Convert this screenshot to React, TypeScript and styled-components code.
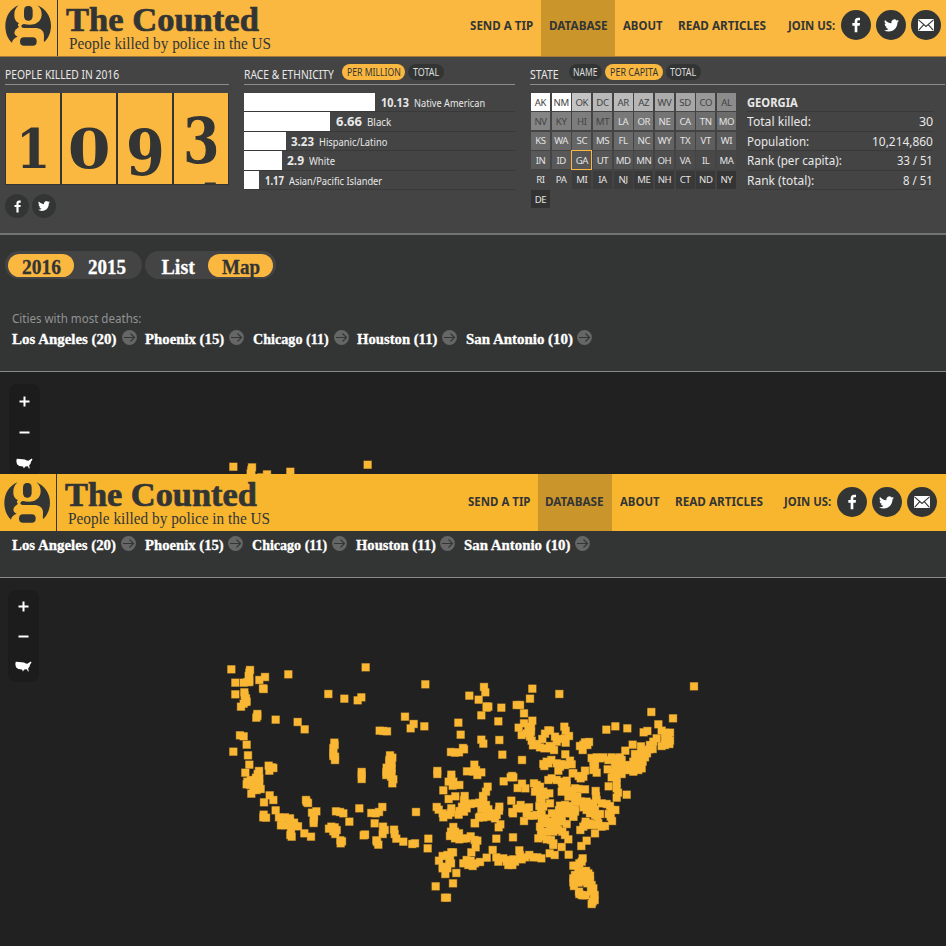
import React, { useLayoutEffect, useRef, useState } from "react";
import styled, { createGlobalStyle, css } from "styled-components";

const GlobalStyle = createGlobalStyle`
  *, *::before, *::after { box-sizing: border-box; }
  body { margin: 0; background: #212121; overflow: hidden; }
  ul, h1, h2, p, dl, dd { margin: 0; padding: 0; list-style: none; }
`;

const SANS = `"Noto Sans", "Open Sans", sans-serif`;
const SERIF = `"Liberation Serif", "Times New Roman", serif`;
const INK = "#333535";
const YELLOW = "#fab840";

/* ---------- fitted text ---------- */

const FitBox = styled.span<{ $w: number }>`
  display: inline-block;
  flex: none;
  width: ${(p) => p.$w}px;
  white-space: nowrap;
`;
const FitInner = styled.span`
  display: inline-block;
  transform-origin: 0 50%;
`;

/** Condenses or widens a run of text so that it fills exactly `w` pixels. */
function Fit({ w, children }: { w: number; children: React.ReactNode }) {
  const ref = useRef<HTMLSpanElement>(null);
  const [scale, setScale] = useState(1);
  useLayoutEffect(() => {
    if (ref.current) setScale(w / ref.current.offsetWidth);
  }, [w]);
  return (
    <FitBox $w={w}>
      <FitInner ref={ref} style={{ transform: `scaleX(${scale})` }}>
        {children}
      </FitInner>
    </FitBox>
  );
}

/* ---------- icons ---------- */

const Logo = () => (
  <svg width="46" height="41" viewBox="13 15 138 123" fill={INK} preserveAspectRatio="none">
    <path d="M54 16C30 25 14 49 14 77c0 21 7 39 20 51 1-8 7-15 17-18-9-4-12-11-8-18 2-5 8-8 12-12-4-3-5-6 0-11-11-5-14-13-14-25 0-13 5-21 13-28z" />
    <path d="M110 16c8 7 13 15 13 27 0 15-9 26-24 30-10 2-20 1-29-1-4 0-8 3-8 6 0 4 3 6 8 6h32c18 0 28 8 28 23 0 8-1 14 0 20 13-12 21-30 21-50 0-27-16-51-41-61z" />
    <rect x="70" y="18" width="26" height="44" rx="11" ry="14" />
    <rect x="58" y="112" width="50" height="25" rx="12" />
  </svg>
);
const Facebook = ({ size }: { size: number }) => (
  <svg width={size} height={size} viewBox="0 0 24 24" fill="#fff">
    <path d="M10 23V13H6.500V9H10V6.500C10 3 12 1 15 1h3v4h-2c-1.500 0-2 .7-2 2v2h4l-.5 4H14v10z" />
  </svg>
);
const Twitter = ({ size }: { size: number }) => (
  <svg width={size} height={size} viewBox="0 0 24 24" fill="#fff">
    <path d="M23.950 4.570a10 10 0 0 1-2.820.77 4.960 4.960 0 0 0 2.160-2.720c-.95.55-2 .96-3.120 1.180a4.920 4.920 0 0 0-8.380 4.480C7.690 8.090 4.070 6.130 1.640 3.160a4.820 4.820 0 0 0-.67 2.480c0 1.710.87 3.210 2.190 4.100a4.900 4.900 0 0 1-2.230-.62v.06a4.920 4.920 0 0 0 3.950 4.830 5 5 0 0 1-2.210.08 4.940 4.940 0 0 0 4.600 3.420A9.870 9.870 0 0 1 0 19.540a14 14 0 0 0 7.550 2.210c9.060 0 14-7.500 14-13.980l-.02-.64a9.900 9.900 0 0 0 2.420-2.560z" />
  </svg>
);
const Mail = () => (
  <svg width="16" height="12" viewBox="0 0 16 12">
    <rect width="16" height="12" rx="1" fill="#fff" />
    <path d="M.5.8 8 7.500 15.500.8M.8 11.200l4.700-5.400M15.200 11.200l-4.700-5.400" fill="none" stroke={INK} strokeWidth="1.1" />
  </svg>
);
const ArrowBadge = () => (
  <svg width="15" height="15" viewBox="0 0 15 15">
    <circle cx="7.500" cy="7.500" r="7.400" fill="#666" />
    <path d="M2 7.500h10.500M8.500 3.500l4 4-4 4" fill="none" stroke={INK} strokeWidth="1.100" />
  </svg>
);
const Country = () => (
  <svg width="17" height="11" viewBox="0 0 17 11" fill="#fff">
    <path d="M.8.7 4 1.100l5 .3 1.800 1.100 1.500.3L14.300 1.400l1.400-1 .8 1-1.500 2.400-.4 1.700-1.500 2 .7 2.700-.9.2-1-2.200-2.600.2-1.400 2.200L7 8.500 3.300 8 1 6.200.3 3z" />
  </svg>
);

/* ---------- masthead ---------- */

const Masthead = styled.header<{ $second?: boolean }>`
  display: flex;
  flex: none;
  height: 57px;
  background: ${(p) => (p.$second ? "#f8b62f" : YELLOW)};
  color: ${INK};
  ${(p) => !p.$second && css`border-bottom: 1px solid #a17a3c;`}
`;
const Brand = styled.div<{ $second?: boolean }>`
  width: ${(p) => (p.$second ? 57 : 58)}px;
  padding: ${(p) => (p.$second ? "8px 0 0 4px" : "5px 0 0 5px")};
  border-right: 1px solid ${INK};
`;
const Titles = styled.div<{ $second?: boolean }>`
  display: flex;
  flex-direction: column;
  padding: ${(p) => (p.$second ? 1 : 0)}px 0 0 8px;
  width: ${(p) => (p.$second ? 403 : 404.5)}px;
`;
const Title = styled.h1`
  padding-top: 3px;
  font: bold 34px/34px ${SERIF};
  height: 37px;
  -webkit-text-stroke: 0.7px ${INK};
`;
const Subtitle = styled.p`
  padding-left: 3px;
  font: 16.500px/14px ${SERIF};
`;
const Nav = styled.nav<{ $second?: boolean }>`
  display: flex;
  height: 100%;
  font: bold 12.500px/51px ${SANS};
  ${(p) => p.$second && css`line-height: 55px;`}
`;
const NavItem = styled.a<{ $active?: boolean }>`
  padding: 0 7.700px;
  height: 100%;
  background: ${(p) => (p.$active ? "#ca962c" : "transparent")};
`;
const Join = styled.div`
  padding-left: 13.500px;
`;
const Socials = styled.div<{ $second?: boolean }>`
  display: flex;
  gap: 5px;
  padding: ${(p) => (p.$second ? "13px 0 0 5.500px" : "10px 0 0 6.500px")};
`;
const Round = styled.span<{ $size: number }>`
  display: flex;
  align-items: center;
  justify-content: center;
  width: ${(p) => p.$size}px;
  height: ${(p) => p.$size}px;
  border-radius: 50%;
  background: ${INK};
`;

function Header({ second }: { second?: boolean }) {
  return (
    <Masthead $second={second}>
      <Brand $second={second}><Logo /></Brand>
      <Titles $second={second}>
        <Title><Fit w={second ? 192 : 193}>The Counted</Fit></Title>
        <Subtitle><Fit w={202}>People killed by police in the US</Fit></Subtitle>
      </Titles>
      <Nav $second={second}>
        <NavItem><Fit w={second ? 62.3 : 63}>SEND A TIP</Fit></NavItem>
        <NavItem $active><Fit w={59}>DATABASE</Fit></NavItem>
        <NavItem><Fit w={40}>ABOUT</Fit></NavItem>
        <NavItem><Fit w={88}>READ ARTICLES</Fit></NavItem>
        <Join><Fit w={47}>JOIN US:</Fit></Join>
      </Nav>
      <Socials $second={second}>
        <Round $size={30}><Facebook size={16} /></Round>
        <Round $size={30}><Twitter size={15} /></Round>
        <Round $size={30}><Mail /></Round>
      </Socials>
    </Masthead>
  );
}

/* ---------- statistics ---------- */

const Stats = styled.section`
  display: flex;
  height: 178px;
  padding: 5px 0 0 5px;
  background: #444;
  border-bottom: 2px solid #737373;
  color: #e8e8e8;
  font-family: ${SANS};
`;
const Block = styled.div<{ $w: number; $gap?: number }>`
  flex: none;
  width: ${(p) => p.$w}px;
  margin-right: ${(p) => p.$gap ?? 0}px;
`;
const Heading = styled.h2`
  display: flex;
  height: 23px;
  padding-top: 4px;
  border-bottom: 1px solid #8c8c8c;
  font: 12px/17px ${SANS};
`;
const Pills = styled.span<{ $left: number }>`
  display: flex;
  gap: 3px;
  margin: -2px 0 0 ${(p) => p.$left}px;
`;
const Pill = styled.span<{ $on?: boolean }>`
  height: 16px;
  padding: 0 4.800px;
  border-radius: 8px;
  background: ${(p) => (p.$on ? YELLOW : INK)};
  color: ${(p) => (p.$on ? INK : "#ddd")};
  font: 11px/16px ${SANS};
`;
const Digits = styled.div`
  display: flex;
  gap: 2px;
  height: 92px;
  margin: 8px 0 0;
  background: ${INK};
  border: 1px solid ${INK};
  border-top: 0;
`;
const Flap = styled.div`
  display: flex;
  flex: 1;
  flex-direction: column;
  align-items: center;
  overflow: hidden;
  background: ${YELLOW};
  color: ${INK};
`;
const Numeral = styled.span<{ $size: number; $top: number; $sx: number }>`
  flex: none;
  height: 76px;
  font: bold ${(p) => p.$size}px/76px "DejaVu Serif", serif;
  transform: scaleX(${(p) => p.$sx});
  margin-top: ${(p) => p.$top}px;
`;
const NextNumeral = styled(Numeral)`
  margin-left: 8px;
`;
const Share = styled.div`
  display: flex;
  gap: 3px;
  padding-top: 9px;
`;
const Bars = styled.ul`
  padding-top: 8px;
`;
const BarRow = styled.li`
  display: flex;
  height: 19.400px;
  border-bottom: 1px solid #393939;
  font: 11px/20px ${SANS};
`;
const Bar = styled.span<{ $w: number }>`
  flex: none;
  width: ${(p) => p.$w}px;
  margin-right: 5.500px;
  background: #fff;
`;
const BarValue = styled.b`
  margin-right: 5px;
  font-size: 12px;
`;
const StateBody = styled.div`
  display: flex;
  padding: 8px 0 0 1px;
`;
const StateGrid = styled.div`
  display: grid;
  grid-template-columns: repeat(10, 19px);
  grid-auto-rows: 18px;
  gap: 1.430px 1.670px;
`;
const Cell = styled.span<{ $bg: string; $fg: string; $on?: boolean }>`
  display: flex;
  align-items: center;
  justify-content: center;
  padding-top: 1px;
  background: ${(p) => p.$bg};
  color: ${(p) => p.$fg};
  font: 9.600px/16px ${SANS};
  letter-spacing: -0.4px;
  ${(p) => p.$on && css`outline: 1.500px solid ${YELLOW}; outline-offset: -0.500px;`}
`;
const Facts = styled.dl`
  width: 186px;
  margin-left: 11px;
`;
const Fact = styled.div`
  display: flex;
  justify-content: space-between;
  height: 19.400px;
  border-bottom: 1px solid #393939;
  font: 12.500px/20px ${SANS};
`;

const RACES: [number, string, number, string, number][] = [
  [131, "10.13", 28, "Native American", 71],
  [86, "6.66", 26, "Black", 24],
  [41.5, "3.23", 23, "Hispanic/Latino", 68],
  [37.5, "2.9", 17, "White", 26],
  [15, "1.17", 19, "Asian/Pacific Islander", 93],
];

const STATES =
  "AK NM OK DC AR AZ WV SD CO AL NV KY HI MT LA OR NE CA TN MO KS WA SC MS FL NC WY TX VT WI IN ID GA UT MD MN OH VA IL MA RI PA MI IA NJ ME NH CT ND NY DE".split(" ");
const SHADES = [
  255, 255, 196, 184, 187, 182, 172, 167, 153, 140,
  133, 128, 125, 122, 121, 119, 117, 113, 110, 108,
  106, 104, 102, 99, 106, 103, 99, 96, 94, 91,
  89, 88, 86, 86, 83, 80, 78, 75, 73, 71,
  68, 68, 60, 60, 60, 57, 57, 57, 56, 52, 50,
];

const FACTS: [string, number, string, number][] = [
  ["Total killed:", 64, "30", 14],
  ["Population:", 62, "10,214,860", 61],
  ["Rank (per capita):", 95, "33 / 51", 36],
  ["Rank (total):", 67, "8 / 51", 30],
];

function Statistics() {
  return (
    <Stats>
      <Block $w={224} $gap={15}>
        <Heading><Fit w={114}>PEOPLE KILLED IN 2016</Fit></Heading>
        <Digits>
          <Flap><Numeral $size={55} $top={18} $sx={0.9}>1</Numeral></Flap>
          <Flap><Numeral $size={55} $top={18} $sx={1.12}>0</Numeral></Flap>
          <Flap><Numeral $size={64} $top={22} $sx={0.87}>9</Numeral></Flap>
          <Flap>
            <Numeral $size={64} $top={10} $sx={0.82}>3</Numeral>
            <NextNumeral $size={64} $top={-9} $sx={0.9}>4</NextNumeral>
          </Flap>
        </Digits>
        <Share>
          <Round $size={24}><Facebook size={13} /></Round>
          <Round $size={24}><Twitter size={12} /></Round>
        </Share>
      </Block>
      <Block $w={271} $gap={15}>
        <Heading>
          <Fit w={90}>RACE &amp; ETHNICITY</Fit>
          <Pills $left={8}>
            <Pill $on><Fit w={53.5}>PER MILLION</Fit></Pill>
            <Pill><Fit w={26}>TOTAL</Fit></Pill>
          </Pills>
        </Heading>
        <Bars>
          {RACES.map(([w, value, vw, label, lw]) => (
            <BarRow key={label}>
              <Bar $w={w} />
              <BarValue><Fit w={vw}>{value}</Fit></BarValue>
              <Fit w={lw}>{label}</Fit>
            </BarRow>
          ))}
        </Bars>
      </Block>
      <Block $w={415}>
        <Heading>
          <Fit w={29}>STATE</Fit>
          <Pills $left={9.5}>
            <Pill><Fit w={24}>NAME</Fit></Pill>
            <Pill $on><Fit w={48}>PER CAPITA</Fit></Pill>
            <Pill><Fit w={26}>TOTAL</Fit></Pill>
          </Pills>
        </Heading>
        <StateBody>
          <StateGrid>
            {STATES.map((s, i) => (
              <Cell
                key={s}
                $bg={`rgb(${SHADES[i]},${SHADES[i]},${SHADES[i]})`}
                $fg={i < 14 ? "#444" : "#e4e4e4"}
                $on={s === "GA"}
              >
                {s}
              </Cell>
            ))}
          </StateGrid>
          <Facts>
            <Fact><b><Fit w={51}>GEORGIA</Fit></b></Fact>
            {FACTS.map(([k, kw, v, vw]) => (
              <Fact key={k}><Fit w={kw}>{k}</Fit><Fit w={vw}>{v}</Fit></Fact>
            ))}
          </Facts>
        </StateBody>
      </Block>
    </Stats>
  );
}

/* ---------- filters and cities ---------- */

const Filters = styled.section`
  height: 137px;
  padding: 16px 0 0 5px;
  background: ${INK};
  border-bottom: 1px solid #8a8a8a;
`;
const Toggles = styled.div`
  display: flex;
  gap: 3px;
`;
const Toggle = styled.div`
  display: flex;
  height: 28px;
  padding: 3px;
  border-radius: 14px;
  background: #444;
  font: bold 20px/26px ${SERIF};
  -webkit-text-stroke: 0.300px;
`;
const Option = styled.span<{ $on?: boolean; $w: number }>`
  display: flex;
  justify-content: center;
  width: ${(p) => p.$w}px;
  height: 22.500px;
  border-radius: 12px;
  background: ${(p) => (p.$on ? YELLOW : "transparent")};
  color: ${(p) => (p.$on ? INK : "#fff")};
`;
const Caption = styled.p`
  height: 17px;
  margin: 31px 0 0 7px;
  color: #929292;
  font: 12px/17px ${SANS};
`;
const Cities = styled.ul<{ $second?: boolean }>`
  display: flex;
  padding-left: ${(p) => (p.$second ? 12 : 7)}px;
  color: #fff;
  font: bold 14.500px/24px ${SERIF};
  -webkit-text-stroke: 0.300px;
`;
const City = styled.li`
  display: flex;
  gap: 4.500px;
  margin-right: 8.800px;
  svg { margin-top: 3px; }
`;
const CityStrip = styled.section`
  height: 47px;
  padding-top: 2px;
  background: ${INK};
  border-bottom: 1px solid #8a8a8a;
`;

const CITIES: [string, number][] = [
  ["Los Angeles (20)", 105],
  ["Phoenix (15)", 79.5],
  ["Chicago (11)", 76],
  ["Houston (11)", 80],
  ["San Antonio (10)", 107],
];

function CityList({ second }: { second?: boolean }) {
  return (
    <Cities $second={second}>
      {CITIES.map(([name, w]) => (
        <City key={name}>
          <Fit w={second ? w - 0.5 : w}>{name}</Fit>
          <ArrowBadge />
        </City>
      ))}
    </Cities>
  );
}

/* ---------- map ---------- */

const MapArea = styled.section<{ $h: number }>`
  position: relative;
  height: ${(p) => p.$h}px;
  background: #212121;
  overflow: hidden;
`;
const Zoom = styled.div<{ $second?: boolean }>`
  position: absolute;
  top: 12px;
  left: ${(p) => (p.$second ? 8 : 9)}px;
  display: flex;
  flex-direction: column;
  align-items: center;
  gap: ${(p) => (p.$second ? 19 : 20)}px;
  width: 31px;
  height: 92px;
  padding-top: ${(p) => (p.$second ? 11 : 12)}px;
  border-radius: 8px;
  background: #1c1c1c;
`;
const Markers = styled.svg`
  display: block;
`;

/** Marker centres, grouped by part of the country, in thirds of a pixel from each group's origin. */
const GROUPS: [number, number, string][] = [
  [210, 640, `64,88 76,128 76,163 148,120 165,111 159,145 161,147 235,103 355,162 403,176 443,181 454,172 467,82
    120,90 118,98 116,108 118,120 118,126 112,126 101,128 103,157 104,166 108,175 110,185 106,186 101,191 93,200
    142,222 139,233 142,228 197,239 263,246 284,268 90,286 101,289 110,314 70,335 114,346 118,374 106,398
    176,377 178,392 190,384 186,382 147,393 143,402 138,413 148,415 130,422 122,420 110,433 120,435 135,435
    148,433 152,447 140,450 130,450 124,461 112,425 162,487 179,466 190,480 197,511 161,524 168,533 160,532
    207,532 215,540 225,532 240,535 213,556 225,556 240,555 255,558 264,559 240,545 243,575 245,590 241,585
    252,548 283,580 303,590 288,480 294,489 290,486 306,518 319,514 312,530 311,549 311,540
    357,566 364,560 374,562 380,570 370,574 376,582 391,601 396,604 392,610
    373,308 370,324 374,315 370,340 370,348 375,350 375,360 455,396 455,417 455,405
    448,505 378,514 400,520 390,516 418,545 461,586 465,584`],
  [340, 640, `256,133 388,167 416,179 432,141 436,157 440,203 440,199 424,226 355,248 362,284 424,299 430,311
    195,230 221,252 212,265 253,259 119,272 141,274 130,273 150,346 157,353 148,360 155,370 140,383 155,385
    139,396 139,405 155,400 153,410 160,418 157,430 148,365 292,393 292,402 333,336 345,338 357,337 369,324
    372,328 334,404 334,415 326,425 340,425 338,437 358,435 310,451 326,477 346,469 403,374 381,394 400,395
    412,405 424,397 408,390 374,468 372,480 378,490 366,500 380,505 392,492 372,515 356,524 358,513 404,490
    418,488 429,468 438,455 443,440 430,480 290,501 296,509 308,520 334,505 333,518 310,532 325,525
    424,507 430,495 440,510 442,525 430,532 417,533 404,549 228,516 94,519 107,520 117,516 127,501 104,550
    129,560 134,570 128,582 74,584 162,569 164,582 169,596 190,605 217,612 225,610 109,601 115,614 111,606
    265,596 263,625 340,561 333,575 330,588 345,575 357,580 345,595 358,598 370,596 392,589 380,595 404,600
    412,602 407,622 394,637 334,637 339,637 308,648 297,662 308,680 322,645 330,655 333,670 322,685 308,685
    316,702 328,670 349,699 339,730 287,739 315,773 321,773 370,670 380,660 392,662 385,675 398,678 420,666
    405,670 440,653`],
  [425, 670, `190,110 229,113 220,154 223,210 232,254 291,270 322,56 315,86 403,72 275,105 285,105 297,130
    322,152 297,160 281,173 310,170 318,170 290,195 305,190 318,185 315,200 320,212 324,226 336,222 345,232
    358,235 370,181 360,191 352,207 375,182 390,200 395,215 374,228 380,235 387,240 405,207 418,170 422,182
    432,198 420,205 422,218 421,253 379,270 365,275 358,288 355,282 370,280 395,280 410,282 400,302 405,290
    420,285 435,272 440,283 443,310 261,318 257,322 236,334 265,322 291,341 278,354 301,355 259,392
    190,418 192,430 205,430 215,435 223,410 222,422 200,440 210,445 226,463 221,472 185,435
    176,415 183,405 178,440 165,440 150,460
    264,430 262,426 275,415 287,405 290,415 300,415 312,412 305,430 315,437 325,437 297,453 335,435
    327,340 335,345 345,350 330,365 345,365 355,365 373,370 360,375 345,385 350,395 343,408 355,410 375,400
    348,418 350,435 362,445 350,455 365,460 345,470 348,485 340,505 352,500 365,508 378,510
    370,330 380,325 395,330 410,335 425,332 412,350 420,360 430,365 440,375 425,345 410,365 430,380 440,362
    405,407 420,405 432,408 402,420 381,430 390,440 410,438 425,430 440,430 445,440 425,415 410,425
    380,455 395,455 410,455 425,462 395,465 375,470 385,485 400,480 412,485 420,495 430,508 365,485
    385,520 385,525 410,531 374,550 389,555 431,554 264,502 214,506 203,540
    214,562 220,575 235,565 245,575 250,585 262,585 255,570 270,575 283,541 285,555 290,568 300,562 313,555
    325,562 337,562 349,565 265,568 445,587`],
  [550, 670, `432,49 304,126 369,145 325,163 232,175 196,169 169,179 281,187 292,183
    335,182 345,188 360,188 355,200 360,212 358,222 345,225 335,228 320,205 345,208 310,215 300,225 308,237
    290,240 298,238 291,250 273,229 248,224 226,242 255,252 265,255 275,250 285,262 278,275 275,295 265,300
    250,305 255,290 240,290 240,300 265,285 250,275 258,265 225,290 235,285 215,285 225,300 210,300 215,312
    200,310 190,305 210,262 215,270 205,275 195,265 185,262 175,270 195,285 160,262 150,265 140,262 125,264
    130,275 135,285 130,300 140,308 132,290 173,298 185,322 200,325 200,340 200,355 204,368 200,383 176,349
    230,374 117,216 105,217 100,224 90,228 98,240 112,225 105,302 100,320 92,325 86,318 70,310
    85,357 105,358 75,355 82,380 75,395 92,394 137,363 138,378 140,390 125,400 110,395 100,400 115,408
    130,405 110,420 125,425 100,412 135,435 120,430 135,418 75,417 75,425 70,440 155,400 170,402 180,408
    185,420 196,420 176,432 182,440 186,453 150,432 142,440 165,468 155,470 142,465 125,465 120,460
    107,455 105,465 100,470 91,480 135,490 110,512 94,528 145,460
    98,565 95,575 88,580 78,587 98,603 85,605 75,615 70,625 70,637 72,648 85,638 85,625 95,620 108,603 115,610
    120,617 120,630 110,620 100,635 112,640 125,645 130,655 123,660 128,665 134,675 132,685 134,690 125,702
    128,695 95,675 88,672 87,665 100,676 107,676`],
];

const POINTS = GROUPS.flatMap(([ox, oy, list]) =>
  list.trim().split(/\s+/).map((pair) => {
    const [x, y] = pair.split(",").map(Number);
    return [ox + x / 3, oy + y / 3] as const;
  }),
);

function DeathMap({ second, height, dx, dy }: { second?: boolean; height: number; dx: number; dy: number }) {
  return (
    <MapArea $h={height}>
      <Markers width="946" height={height}>
        <g transform={`translate(${dx} ${dy})`}>
          <g fill="#7a5c26">
            {POINTS.map(([x, y], i) => <rect key={i} x={x - 4.3} y={y - 4.3} width="8.6" height="8.6" />)}
          </g>
          <g fill="#f9b733">
            {POINTS.map(([x, y], i) => <rect key={i} x={x - 3.8} y={y - 3.8} width="7.6" height="7.6" />)}
          </g>
        </g>
      </Markers>
      <Zoom $second={second}>
        <svg width="11" height="11" stroke="#fff" strokeWidth="2"><path d="M.5 5.500h10M5.500.5v10" /></svg>
        <svg width="11" height="11" stroke="#fff" strokeWidth="2"><path d="M.5 5.500h10" /></svg>
        <Country />
      </Zoom>
    </MapArea>
  );
}

/* ---------- page ---------- */

const Page = styled.main`
  width: 946px;
  height: 946px;
  overflow: hidden;
  background: #212121;
`;
const Frame = styled.div<{ $h: number }>`
  height: ${(p) => p.$h}px;
  overflow: hidden;
`;

export default function App() {
  return (
    <Page>
      <GlobalStyle />
      <Frame $h={474}>
        <Header />
        <Statistics />
        <Filters>
          <Toggles>
            <Toggle>
              <Option $on $w={66}><Fit w={39}>2016</Fit></Option>
              <Option $w={65}><Fit w={38}>2015</Fit></Option>
            </Toggle>
            <Toggle>
              <Option $w={60}><Fit w={33}>List</Fit></Option>
              <Option $on $w={65}><Fit w={38}>Map</Fit></Option>
            </Toggle>
          </Toggles>
          <Caption><Fit w={129}>Cities with most deaths:</Fit></Caption>
          <CityList />
        </Filters>
        <DeathMap height={102} dx={2} dy={-574.6} />
      </Frame>
      <Frame $h={472}>
        <Header second />
        <CityStrip><CityList second /></CityStrip>
        <DeathMap second height={368} dx={0} dy={-578} />
      </Frame>
    </Page>
  );
}
